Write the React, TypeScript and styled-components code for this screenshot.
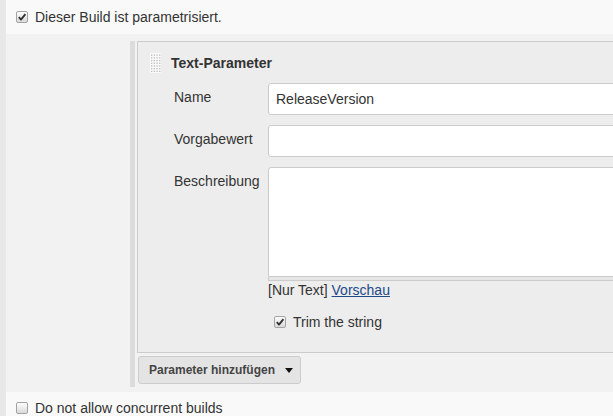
import React from 'react';
import styled, { createGlobalStyle } from 'styled-components';

const Global = createGlobalStyle`
  html, body { margin: 0; padding: 0; background: #f9f9f9; overflow: hidden; }
  body { font-family: "Liberation Sans", Arial, sans-serif; font-size: 14px; color: #333; }
`;

const Page = styled.div`
  border-left: 6px solid #e8e8e8;
  height: 416px;
  overflow: hidden;
`;

const OptionRow = styled.div<{ $h: number }>`
  display: flex;
  align-items: center;
  gap: 7px;
  height: ${(p) => p.$h}px;
  padding-left: 10px;
  background: #f9f9f9;
  line-height: 17px;
`;

const Section = styled.div`
  background: #f2f2f2;
  padding: 7px 0 5px 124px;
`;

const Nested = styled.div`
  display: flex;
  flex-direction: column;
  align-items: flex-start;
  border-left: 5px solid #dcdcdc;
  padding: 0 0 3px 2px;
`;

const Panel = styled.div`
  width: 520px;
  box-sizing: border-box;
  background: #ededed;
  border: 1px solid #cccccc;
  border-right: none;
  padding: 11px 0 21px 12px;
`;

const Header = styled.div`
  display: flex;
  align-items: center;
  gap: 10px;
  height: 20px;
`;

const Title = styled.span`
  font-weight: bold;
  font-size: 14px;
  color: #333;
`;

const Form = styled.div`
  margin: 10px 0 0 24px;
  display: flex;
  flex-direction: column;
  gap: 10px;
`;

const FieldRow = styled.div`
  display: flex;
`;

const Label = styled.div`
  width: 94px;
  flex: none;
  padding-top: 6px;
  line-height: 17px;
  color: #333;
`;

const Control = styled.div`
  flex: 1;
  display: flex;
  flex-direction: column;
`;

const TextInput = styled.input`
  box-sizing: border-box;
  width: 100%;
  height: 32px;
  border: 1px solid #cccccc;
  border-radius: 3px;
  background: #fff;
  padding: 0 7px;
  font: inherit;
  font-size: 14px;
  color: #333;
  outline: none;
`;

const TextArea = styled.textarea`
  box-sizing: border-box;
  width: 100%;
  height: 110px;
  border: 1px solid #cccccc;
  border-radius: 3px 3px 0 0;
  background: #fff;
  resize: none;
  display: block;
  margin: 0;
  font: inherit;
  outline: none;
`;

const Grip = styled.div`
  height: 3px;
  border: 1px solid #cccccc;
  border-top: none;
  background: #e6e6e6;
`;

const Hint = styled.div`
  line-height: 18px;
  color: #333;
`;

const Link = styled.a`
  color: #204a87;
  text-decoration: underline;
`;

const CheckRow = styled.label`
  display: flex;
  align-items: center;
  gap: 7px;
  height: 18px;
  margin: 14px 0 0 6px;
  line-height: 17px;
`;

const Box = styled.span`
  display: inline-flex;
  align-items: center;
  justify-content: center;
  width: 12px;
  height: 12px;
  box-sizing: border-box;
  border: 1px solid #a3a3a3;
  border-radius: 2px;
  background: linear-gradient(#fdfdfd, #dadada);
  flex: none;
`;

const AddButton = styled.button`
  display: flex;
  align-items: center;
  gap: 10px;
  margin: 3px 0 0 1px;
  height: 28px;
  box-sizing: border-box;
  padding: 0 7px 0 10px;
  background: #e4e4e4;
  border: 1px solid #cccccc;
  border-radius: 3px;
  font-family: "Liberation Sans", Arial, sans-serif;
  font-weight: bold;
  font-size: 12px;
  color: #444;
`;

const Checkbox = ({ checked }: { checked: boolean }) => (
  <Box>
    {checked && (
      <svg width="10" height="10" viewBox="0 0 10 10">
        <path d="M1.8 5.2 L4 7.6 L8.4 2.2" fill="none" stroke="#333" strokeWidth="1.9" strokeLinejoin="round" />
      </svg>
    )}
  </Box>
);

const DragHandle = () => {
  const dots: React.ReactNode[] = [];
  for (let r = 0; r < 7; r++) {
    for (let c = 0; c < 4; c++) {
      dots.push(<rect key={`${r}-${c}`} x={1 + c * 2.7} y={1.5 + r * 2.7} width="1.3" height="1.3" fill="#bdbdbd" />);
    }
  }
  return (
    <svg width="11" height="20" viewBox="0 0 11 20">
      <rect x="0" y="0" width="11" height="20" fill="#f9f9f9" />
      {dots}
    </svg>
  );
};

export default function App() {
  return (
    <>
      <Global />
      <Page>
        <OptionRow $h={34}>
          <Checkbox checked />
          <span>Dieser Build ist parametrisiert.</span>
        </OptionRow>
        <Section>
          <Nested>
            <Panel>
              <Header>
                <DragHandle />
                <Title>Text-Parameter</Title>
              </Header>
              <Form>
                <FieldRow>
                  <Label>Name</Label>
                  <Control>
                    <TextInput defaultValue="ReleaseVersion" />
                  </Control>
                </FieldRow>
                <FieldRow>
                  <Label>Vorgabewert</Label>
                  <Control>
                    <TextInput defaultValue="" />
                  </Control>
                </FieldRow>
                <FieldRow>
                  <Label>Beschreibung</Label>
                  <Control>
                    <TextArea />
                    <Grip />
                    <Hint>
                      [Nur Text] <Link href="#">Vorschau</Link>
                    </Hint>
                    <CheckRow>
                      <Checkbox checked />
                      <span>Trim the string</span>
                    </CheckRow>
                  </Control>
                </FieldRow>
              </Form>
            </Panel>
            <AddButton>
              <span>Parameter hinzufügen</span>
              <svg width="8" height="5" viewBox="0 0 8 5">
                <path d="M0 0 L8 0 L4 5 Z" fill="#111" />
              </svg>
            </AddButton>
          </Nested>
        </Section>
        <OptionRow $h={32}>
          <Checkbox checked={false} />
          <span>Do not allow concurrent builds</span>
        </OptionRow>
      </Page>
    </>
  );
}
